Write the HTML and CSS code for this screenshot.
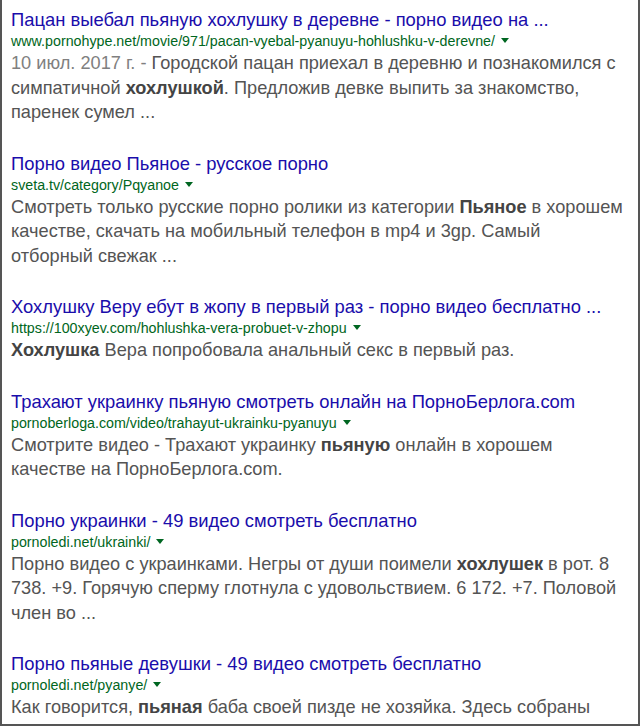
FILE: index.html
```html
<!DOCTYPE html>
<html lang="ru">
<head>
    <meta charset="UTF-8">
    <title>Результаты поиска</title>
    <link rel="stylesheet" href="styles.css">
</head>
<body>
    <div class="results">
        <div class="result">
            <a class="title" href="#">Пацан выебал пьяную хохлушку в деревне - порно видео на ...</a>
            <div class="url">www.pornohype.net/movie/971/pacan-vyebal-pyanuyu-hohlushku-v-derevne/<span class="arrow"></span></div>
            <div class="snippet"><span class="date">10 июл. 2017 г. - </span>Городской пацан приехал в деревню и познакомился с симпатичной <b>хохлушкой</b>. Предложив девке выпить за знакомство, паренек сумел ...</div>
        </div>

        <div class="result">
            <a class="title" href="#">Порно видео Пьяное - русское порно</a>
            <div class="url">sveta.tv/category/Pqyanoe<span class="arrow"></span></div>
            <div class="snippet">Смотреть только русские порно ролики из категории <b>Пьяное</b> в хорошем качестве, скачать на мобильный телефон в mp4 и 3gp. Самый отборный свежак ...</div>
        </div>

        <div class="result">
            <a class="title" href="#">Хохлушку Веру ебут в жопу в первый раз - порно видео бесплатно ...</a>
            <div class="url">https://100xyev.com/hohlushka-vera-probuet-v-zhopu<span class="arrow"></span></div>
            <div class="snippet"><b>Хохлушка</b> Вера попробовала анальный секс в первый раз.</div>
        </div>

        <div class="result">
            <a class="title" href="#">Трахают украинку пьяную смотреть онлайн на ПорноБерлога.com</a>
            <div class="url">pornoberloga.com/video/trahayut-ukrainku-pyanuyu<span class="arrow"></span></div>
            <div class="snippet">Смотрите видео - Трахают украинку <b>пьяную</b> онлайн в хорошем качестве на ПорноБерлога.com.</div>
        </div>

        <div class="result">
            <a class="title" href="#">Порно украинки - 49 видео смотреть бесплатно</a>
            <div class="url">pornoledi.net/ukrainki/<span class="arrow"></span></div>
            <div class="snippet">Порно видео с украинками. Негры от души поимели <b>хохлушек</b> в рот. 8 738. +9. Горячую сперму глотнула с удовольствием. 6 172. +7. Половой член во ...</div>
        </div>

        <div class="result">
            <a class="title" href="#">Порно пьяные девушки - 49 видео смотреть бесплатно</a>
            <div class="url">pornoledi.net/pyanye/<span class="arrow"></span></div>
            <div class="snippet">Как говорится, <b>пьяная</b> баба своей пизде не хозяйка. Здесь собраны</div>
        </div>
    </div>
</body>
</html>
```

FILE: styles.css
```css
body {
    margin: 0;
    background: #fff;
    font-family: "Liberation Sans", Arial, sans-serif;
}
.results {
    width: 627px;
    height: 715px;
    overflow: hidden;
    border: 2px solid #555;
    border-top: none;
    padding: 9px 0 0 9px;
}
.result {
    margin-bottom: 28px;
    width: 614px;
}
.title {
    display: block;
    color: #1a0dab;
    text-decoration: none;
    font-size: 18.4px;
    line-height: 22px;
    white-space: nowrap;
}
.url {
    color: #006621;
    font-size: 14.25px;
    line-height: 20px;
    white-space: nowrap;
}
.arrow {
    display: inline-block;
    margin-left: 6px;
    vertical-align: 3px;
    border-left: 4px solid transparent;
    border-right: 4px solid transparent;
    border-top: 5px solid #006621;
}
.snippet {
    color: #545454;
    font-size: 18.2px;
    line-height: 24.5px;
}
.snippet b {
    color: #444;
}
.date {
    color: #808080;
}
```
